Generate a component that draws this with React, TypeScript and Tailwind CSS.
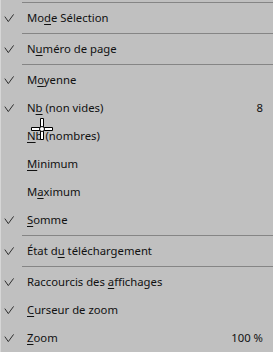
import React from 'react';

type Item = {
  type: 'item';
  checked: boolean;
  before: string;
  key: string;
  after: string;
  value?: string;
};
type Sep = { type: 'sep' };

const rows: (Item | Sep)[] = [
  { type: 'sep' },
  { type: 'item', checked: true, before: 'Mo', key: 'd', after: 'e Sélection' },
  { type: 'sep' },
  { type: 'item', checked: true, before: 'N', key: 'u', after: 'méro de page' },
  { type: 'sep' },
  { type: 'item', checked: true, before: 'M', key: 'o', after: 'yenne' },
  { type: 'item', checked: true, before: 'N', key: 'b', after: ' (non vides)', value: '8' },
  { type: 'item', checked: false, before: '', key: 'N', after: 'b (nombres)' },
  { type: 'item', checked: false, before: '', key: 'M', after: 'inimum' },
  { type: 'item', checked: false, before: 'M', key: 'a', after: 'ximum' },
  { type: 'item', checked: true, before: '', key: 'S', after: 'omme' },
  { type: 'sep' },
  { type: 'item', checked: true, before: 'État d', key: 'u', after: ' téléchargement' },
  { type: 'sep' },
  { type: 'item', checked: true, before: 'Raccourcis des ', key: 'a', after: 'ffichages' },
  { type: 'item', checked: true, before: '', key: 'C', after: 'urseur de zoom' },
  { type: 'item', checked: true, before: '', key: 'Z', after: 'oom', value: '100 %' },
];

const Check = () => (
  <svg width="16" height="12" viewBox="0 0 16 12" className="shrink-0">
    <path d="M3.8 4.6 L7.3 9.6 L12.6 2.4" fill="none" stroke="#2e2e2e" strokeWidth="1" />
  </svg>
);

const Cursor = () => (
  <svg
    width="24"
    height="24"
    viewBox="0 0 24 24"
    className="pointer-events-none absolute left-[29px] top-[117px]"
  >
    <path
      d="M10.5 1.5h3v9h9v3h-9v9h-3v-9h-9v-3h9z"
      fill="#ffffff"
      stroke="#000000"
      strokeWidth="1"
    />
    <circle cx="12" cy="12" r="2.5" fill="#ffffff" stroke="#000000" strokeWidth="1" />
  </svg>
);

export default function App() {
  return (
    <div className="relative h-[352px] w-[273px] overflow-hidden border-l border-[#d6d6d6] bg-[#c0c0c0] pt-px font-['Noto_Sans','Liberation_Sans',sans-serif] text-[11.3px] text-[#111111]">
      {rows.map((row, i) =>
        row.type === 'sep' ? (
          <div key={i} className="flex h-[3px] items-center pl-[21px]">
            <div className="h-px w-full bg-[#858585]" />
          </div>
        ) : (
          <div key={i} className="flex h-[28px] items-center pr-[10px]">
            <div className="flex w-[26px] items-center">{row.checked && <Check />}</div>
            <span className="flex-1 whitespace-nowrap">
              {row.before}
              <span className="underline underline-offset-2">{row.key}</span>
              {row.after}
            </span>
            {row.value && <span className="whitespace-nowrap">{row.value}</span>}
          </div>
        )
      )}
      <Cursor />
    </div>
  );
}
